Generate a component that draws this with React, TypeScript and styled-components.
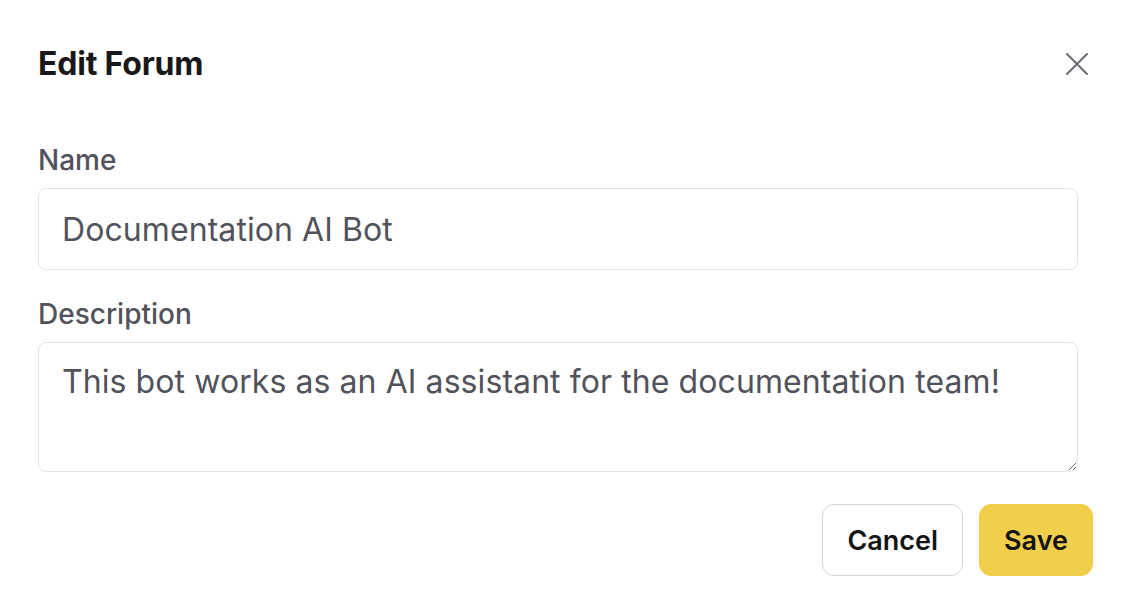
import React from "react";
import styled, { createGlobalStyle } from "styled-components";

const GlobalStyle = createGlobalStyle`
  html, body {
    margin: 0;
    padding: 0;
    background: #ffffff;
  }
  * { box-sizing: border-box; }
`;

const Dialog = styled.div`
  width: 1126px;
  height: 614px;
  background: #ffffff;
  font-family: Inter, "Noto Sans", sans-serif;
  display: flex;
  flex-direction: column;
`;

const Header = styled.div`
  display: flex;
  align-items: center;
  justify-content: space-between;
  padding: 44px 38px 0 38px;
  height: 84px;
`;

const Title = styled.h2`
  margin: 0;
  font-size: 32px;
  line-height: 40px;
  font-weight: 700;
  color: #18181b;
  letter-spacing: -0.2px;
`;

const CloseButton = styled.button`
  border: none;
  background: transparent;
  padding: 0;
  width: 22px;
  height: 22px;
  display: flex;
  align-items: center;
  justify-content: center;
  cursor: pointer;
  color: #6b6b74;
`;

const Form = styled.div`
  display: flex;
  flex-direction: column;
  padding: 60px 48px 0 38px;
`;

const Field = styled.div<{ $gapTop?: number }>`
  display: flex;
  flex-direction: column;
  gap: 12px;
  margin-top: ${(p) => p.$gapTop ?? 0}px;
`;

const Label = styled.label`
  font-size: 28px;
  line-height: 32px;
  font-weight: 500;
  color: #52525b;
`;

const TextInput = styled.input`
  width: 100%;
  height: 82px;
  border: 1px solid #e4e4e7;
  border-radius: 8px;
  padding: 0 23px;
  font-family: Inter, "Noto Sans", sans-serif;
  font-size: 32px;
  letter-spacing: 0.08px;
  color: #52525b;
  background: #ffffff;
  outline: none;
`;

const TextArea = styled.textarea`
  width: 100%;
  height: 130px;
  border: 1px solid #e4e4e7;
  border-radius: 8px;
  padding: 19px 23px;
  font-family: Inter, "Noto Sans", sans-serif;
  font-size: 32px;
  line-height: 40px;
  letter-spacing: 0.08px;
  color: #52525b;
  background: #ffffff;
  outline: none;
  resize: vertical;
  display: block;
`;

const Footer = styled.div`
  display: flex;
  justify-content: flex-end;
  gap: 16px;
  padding: 32px 33px 0 0;
`;

const Button = styled.button<{ $primary?: boolean }>`
  height: 72px;
  padding: 0 24px;
  border-radius: 12px;
  border: 1px solid ${(p) => (p.$primary ? "#f2cf4b" : "#d4d4d8")};
  background: ${(p) => (p.$primary ? "#f2cf4b" : "#ffffff")};
  color: #141414;
  font-family: Inter, "Noto Sans", sans-serif;
  font-size: 27px;
  font-weight: 600;
  cursor: pointer;
`;

export default function App() {
  return (
    <>
      <GlobalStyle />
      <Dialog>
        <Header>
          <Title>Edit Forum</Title>
          <CloseButton aria-label="Close">
            <svg width="22" height="22" viewBox="0 0 22 22" fill="none">
              <path
                d="M1 1L21 21M21 1L1 21"
                stroke="currentColor"
                strokeWidth="2"
                strokeLinecap="round"
              />
            </svg>
          </CloseButton>
        </Header>
        <Form>
          <Field>
            <Label>Name</Label>
            <TextInput defaultValue="Documentation AI Bot" />
          </Field>
          <Field $gapTop={28}>
            <Label>Description</Label>
            <TextArea defaultValue="This bot works as an AI assistant for the documentation team!" />
          </Field>
        </Form>
        <Footer>
          <Button>Cancel</Button>
          <Button $primary>Save</Button>
        </Footer>
      </Dialog>
    </>
  );
}
